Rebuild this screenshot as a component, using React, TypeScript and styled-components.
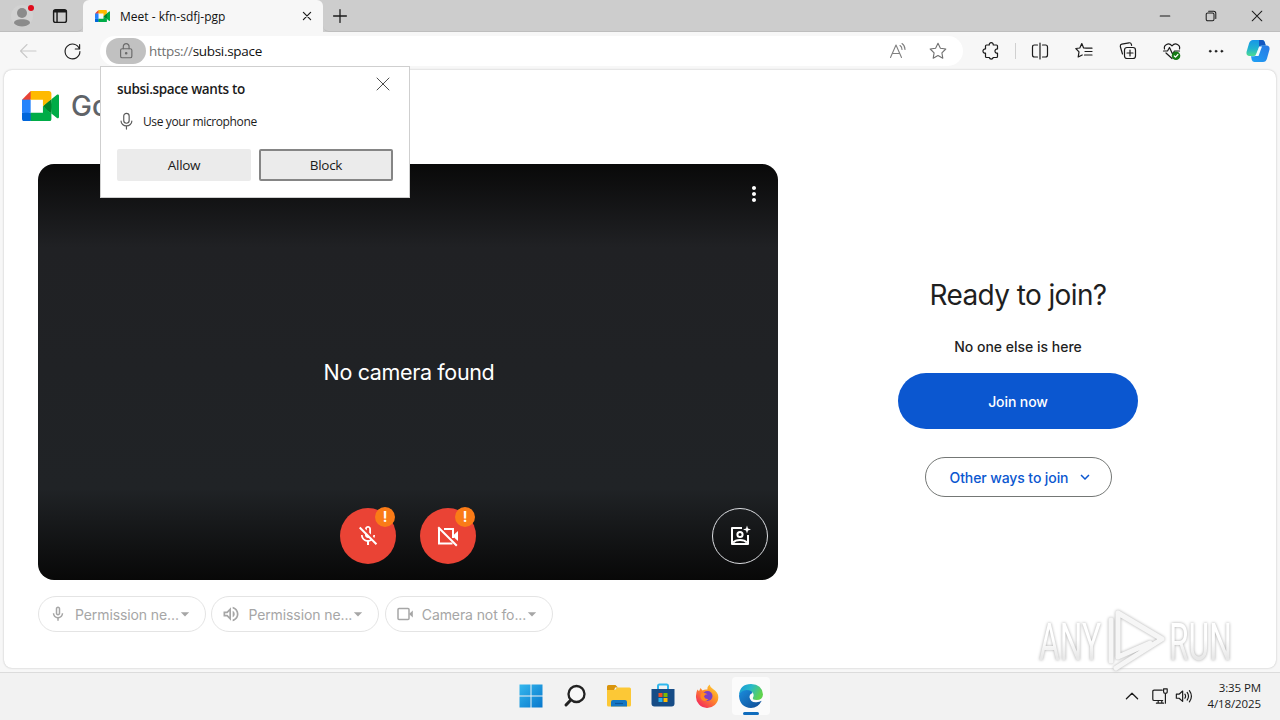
import type { ReactNode } from 'react';
import styled, { createGlobalStyle } from 'styled-components';
import {
  MdArrowDropDown,
  MdExpandMore,
  MdMoreVert,
  MdOutlineMicNone,
  MdOutlineMicOff,
  MdOutlineVolumeUp,
} from 'react-icons/md';

interface LineIconProps {
  size?: number;
  color?: string;
  weight?: number;
  children: ReactNode;
}

// 20-unit outline icon, used by the browser toolbar and the tray
const LineIcon: React.FC<LineIconProps> = ({
  size = 20,
  color = '#1b1b1b',
  weight = 1.1,
  children,
}) => (
  <svg
    width={size}
    height={size}
    viewBox="0 0 20 20"
    fill="none"
    stroke={color}
    strokeWidth={weight}
    strokeLinecap="round"
    strokeLinejoin="round"
  >
    {children}
  </svg>
);

const MeetLogo: React.FC<{ width: number }> = ({ width }) => (
  <svg width={width} height={(width * 72) / 87.5} viewBox="0 0 87.5 72">
    <path fill="#00832d" d="M49.5 36l8.53 9.75 11.47 7.33 2-17.02-2-16.64-11.69 6.44z" />
    <path fill="#0066da" d="M0 51.5V66c0 3.315 2.685 6 6 6h14.5l3-10.96-3-9.54-9.95-3z" />
    <path fill="#e94235" d="M20.5 0L0 20.5l10.55 3 9.95-3 2.95-9.41z" />
    <path fill="#2684fc" d="M20.5 20.5H0v31h20.5z" />
    <path
      fill="#00ac47"
      d="M82.6 8.68L69.5 19.42v33.66l13.16 10.79c1.97 1.54 4.85.135 4.85-2.37V11c0-2.535-2.945-3.925-4.91-2.32zM49.5 36v15.5h-29V72h43c3.315 0 6-2.685 6-6V53.08z"
    />
    <path fill="#ffba00" d="M63.5 0h-43v20.5h29V36l20-16.57V6c0-3.315-2.685-6-6-6z" />
  </svg>
);

const TabStrip = () => (
  <Strip>
    <StripTools>
      <Avatar>
        <svg width="22" height="22" viewBox="0 0 22 22">
          <circle cx="11" cy="11" r="11" fill="#d2d2d2" />
          <circle cx="11" cy="8" r="5" fill="#8b8b8b" />
          <path d="M3 18.200c0-3 3.200-4 8-4s8 1 8 4c-2 2.400-5 3.300-8 3.300s-6-.9-8-3.300z" fill="#8b8b8b" />
        </svg>
        <Dot />
      </Avatar>
      <LineIcon size={16} weight={1.8}>
        <rect x="2" y="2" width="16" height="16" rx="2.500" />
        <path d="M3 4h14" strokeWidth="3" />
        <path d="M6.300 5v12.500" />
      </LineIcon>
    </StripTools>
    <Tab>
      <MeetLogo width={15} />
      <TabTitle>Meet - kfn-sdfj-pgp</TabTitle>
      <LineIcon size={12} weight={2}>
        <path d="M4 4l12 12M16 4L4 16" />
      </LineIcon>
    </Tab>
    <NewTab>
      <LineIcon size={16} weight={1.6}>
        <path d="M10 2v16M2 10h16" />
      </LineIcon>
    </NewTab>
    <WindowButtons>
      <LineIcon size={12} weight={1.7}>
        <path d="M2 10h16" />
      </LineIcon>
      <LineIcon size={12} weight={1.7}>
        <rect x="2" y="5" width="13" height="13" rx="2.500" />
        <path d="M6 2h8.500Q18 2 18 5.500V14" />
      </LineIcon>
      <LineIcon size={12} weight={1.7}>
        <path d="M2 2l16 16M18 2L2 18" />
      </LineIcon>
    </WindowButtons>
  </Strip>
);

const Toolbar = () => (
  <Bar>
    <NavCell>
      <LineIcon color="#c9c9c9">
        <path d="M18 10H2.500M9 3.500L2.500 10 9 16.500" />
      </LineIcon>
    </NavCell>
    <NavCell>
      <LineIcon size={19} weight={1.2}>
        <path d="M17.300 7.200A7.800 7.800 0 1 0 17.800 10M17.500 2.800v4.600h-4.600" />
      </LineIcon>
    </NavCell>
    <AddressBar>
      <SiteInfo>
        <LineIcon color="#6b6b6b" size={18} weight={1.3}>
          <rect x="4" y="7.500" width="12.500" height="10" rx="1.800" />
          <path d="M7 7.500V5a3.200 3.200 0 0 1 6.400 0v2.500" />
          <circle cx="10.200" cy="12.500" r=".8" fill="#6b6b6b" />
        </LineIcon>
      </SiteInfo>
      <Url>
        <span>https://</span>subsi.space
      </Url>
      <AddressCell>
        <LineIcon color="#808080">
          <path d="M2.500 16.500L8 4l5.500 12.500M4.500 12.500h7M12 4.500c1.500 1 2 2.200 2 4M14 2.500c2.200 1.500 3 3.500 3 6" />
        </LineIcon>
      </AddressCell>
      <AddressCell>
        <LineIcon color="#707070">
          <path d="M10 2.300l2.400 4.900 5.400.8-3.900 3.800.9 5.400-4.800-2.600-4.800 2.600.9-5.400L2.200 8l5.400-.8z" />
        </LineIcon>
      </AddressCell>
    </AddressBar>
    <ToolGroup>
      <ToolCell>
        <LineIcon weight={1.2}>
          <path d="M5.500 4h2.800a2 2 0 1 1 3.900 0h3.300q1 0 1 1v3a2.100 2.100 0 1 0 0 4.100v3.400q0 1-1 1h-3.300a2 2 0 0 1-3.900 0H5.500q-1 0-1-1v-3.400a2.100 2.100 0 1 1 0-4.100V5q0-1 1-1z" />
        </LineIcon>
      </ToolCell>
      <Divider />
      <ToolCell>
        <LineIcon weight={1.2}>
          <path d="M7.500 4H4.500Q2.500 4 2.500 6v8q0 2 2 2h3M12.500 4h3q2 0 2 2v8q0 2-2 2h-3M10 2v16" />
        </LineIcon>
      </ToolCell>
      <ToolCell>
        <LineIcon weight={1.2}>
          <path d="M12.300 7.200L9.600 6.900 7.800 2.500 5.800 7 1.800 7.500l3.200 3.300-.8 5.200 4-2M12.300 7.200H18M11 10.500h7M10.500 14H18" />
        </LineIcon>
      </ToolCell>
      <ToolCell>
        <LineIcon weight={1.2}>
          <rect x="6.500" y="6.500" width="11" height="11" rx="2.500" />
          <path d="M12 9v6M9 12h6M4.500 13L2.300 5.500Q2 3.600 3.800 3.200l7.200-1.400q1.900-.3 2.400 1.600l.2.900" />
        </LineIcon>
      </ToolCell>
      <ToolCell>
        <LineIcon weight={1.2}>
          <path d="M2.500 8C1.500 4 6.500 1 10 4.800 13.500 1 18.500 4 17.500 8M4 12l6 5.500M1.500 10h4l2-3.500 3 6.500 2-3h5" />
          <circle cx="14" cy="14.800" r="4.300" fill="#157a15" stroke="none" />
          <path d="M12.300 15l1.200 1.200 2.400-2.700" stroke="#fff" />
        </LineIcon>
      </ToolCell>
      <ToolCell>
        <LineIcon weight={0.6}>
          <circle cx="4.200" cy="10.200" r="1" fill="#1b1b1b" />
          <circle cx="10" cy="10.200" r="1" fill="#1b1b1b" />
          <circle cx="15.800" cy="10.200" r="1" fill="#1b1b1b" />
        </LineIcon>
      </ToolCell>
      <CopilotCell>
        <svg width="24" height="24" viewBox="0 0 24 24">
          <defs>
            <linearGradient id="copLeft" x1="0" y1="0" x2="0" y2="1">
              <stop offset="0" stopColor="#1696e8" />
              <stop offset=".55" stopColor="#21b3cf" />
              <stop offset="1" stopColor="#4fdc90" />
            </linearGradient>
            <linearGradient id="copRight" x1="1" y1="0" x2="0" y2="1">
              <stop offset="0" stopColor="#2a78e4" />
              <stop offset="1" stopColor="#1ea2f5" />
            </linearGradient>
          </defs>
          <path d="M7 1h9q2 0 2.700 2l1 3.500h-4.200q-2 0-2.700 2L11 14.500Q10.300 17 8 17H3Q0 16.500.5 13L3 4.500Q4 1 7 1z" fill="url(#copLeft)" />
          <path d="M13 1h3q2 0 2.700 2l1 3.500h-4.200q-1.800 0-2.500 2z" fill="#1558c0" />
          <path d="M17 23H8.500q-2 0-2.700-2L5 17.200h3.200q2.200 0 2.900-2.200l1.900-6.500q.6-2 2.700-2H21q3 .5 2.500 4L21 19.500Q20 23 17 23z" fill="url(#copRight)" />
          <path d="M13.300 7.500h2.700L12.500 17H9.300z" fill="#f4fbff" />
        </svg>
      </CopilotCell>
    </ToolGroup>
  </Bar>
);

const PermissionPrompt = () => (
  <Prompt>
    <PromptHead>
      <PromptTitle>subsi.space wants to</PromptTitle>
      <LineIcon size={16} color="#333">
        <path d="M2.500 2.500l15 15M17.500 2.500l-15 15" />
      </LineIcon>
    </PromptHead>
    <PromptRow>
      <LineIcon size={18} color="#5a5a5a" weight={1.3}>
        <rect x="7.500" y="1.500" width="6" height="11" rx="3" />
        <path d="M4.500 10a6 5.500 0 0 0 12 0M10.500 15.500V19" />
      </LineIcon>
      <PromptText>Use your microphone</PromptText>
    </PromptRow>
    <PromptActions>
      <PromptButton>Allow</PromptButton>
      <PromptButton $focused>Block</PromptButton>
    </PromptActions>
  </Prompt>
);

const CameraPreview = () => (
  <Preview>
    <PreviewTop>
      <MdMoreVert size={24} />
    </PreviewTop>
    <PreviewMessage>No camera found</PreviewMessage>
    <PreviewControls>
      <RoundButton>
        <MdOutlineMicOff size={24} />
        <Alert>!</Alert>
      </RoundButton>
      <RoundButton>
        <svg width="24" height="24" viewBox="0 0 24 24" fill="none" stroke="#fff" strokeWidth="2">
          <path d="M8 5h9v9M3 4.500V19.500h13.500" />
          <path d="M17 11.500l5-4.500v10l-5-4.500z" fill="#fff" stroke="none" />
          <path d="M2.200 3.200l18.600 18.600" />
        </svg>
        <Alert>!</Alert>
      </RoundButton>
      <EffectsButton>
        <svg width="24" height="24" viewBox="0 0 24 24" fill="none" stroke="#fff" strokeWidth="2">
          <path d="M14 4H4v16h16V11" strokeLinejoin="round" />
          <circle cx="12" cy="10.500" r="2.600" />
          <path d="M5 18.500c3-3.500 11-3.500 14 0" />
          <path d="M19 1.500l1 3 3 1-3 1-1 3-1-3-3-1 3-1z" fill="#fff" stroke="none" />
        </svg>
      </EffectsButton>
    </PreviewControls>
  </Preview>
);

const CameraIcon = () => (
  <svg width="18" height="18" viewBox="0 0 18 18" fill="none" stroke="currentColor" strokeWidth="1.500">
    <rect x="2" y="3.500" width="11" height="11" rx="1" />
    <path d="M13 9l3.800-3.500v7z" fill="currentColor" stroke="none" />
  </svg>
);

const devices = [
  { icon: <MdOutlineMicNone size={18} />, label: 'Permission ne...' },
  { icon: <MdOutlineVolumeUp size={20} />, label: 'Permission ne...' },
  { icon: <CameraIcon />, label: 'Camera not fo...' },
];

const JoinPanel = () => (
  <Join>
    <JoinTitle>Ready to join?</JoinTitle>
    <JoinNote>No one else is here</JoinNote>
    <JoinButton>Join now</JoinButton>
    <OtherButton>
      Other ways to join
      <MdExpandMore size={18} />
    </OtherButton>
  </Join>
);

const Taskbar = () => (
  <Task>
    <span />
    <TaskApps>
      <AppCell>
        <svg width="24" height="24" viewBox="0 0 24 24">
          <defs>
            <linearGradient id="win" x1="0" y1="0" x2="1" y2="1">
              <stop offset="0" stopColor="#35b8ee" />
              <stop offset="1" stopColor="#0877cc" />
            </linearGradient>
          </defs>
          <path d="M.5.5h11v11H.5zM12.500.5h11v11h-11zM.5 12.500h11v11H.5zM12.500 12.500h11v11h-11z" fill="url(#win)" />
        </svg>
      </AppCell>
      <AppCell>
        <svg width="24" height="24" viewBox="0 0 24 24" fill="none" stroke="#222" strokeLinecap="round">
          <circle cx="13.500" cy="10" r="8" strokeWidth="2.300" fill="#f8f8f8" />
          <path d="M7.800 16L3 21" strokeWidth="3" />
        </svg>
      </AppCell>
      <AppCell>
        <svg width="26" height="24" viewBox="0 0 26 24">
          <path d="M1 2.500Q1 1 2.500 1h7l2.500 2.500h-3L8 7H1z" fill="#d9940b" />
          <path d="M1 6h8l2-2.500h12.500Q25 3.500 25 5v16q0 1.500-1.500 1.500h-21Q1 22.500 1 21z" fill="#fcc836" />
          <path d="M5 22.500V18q0-2 2-2h12q2 0 2 2v4.500z" fill="#1477c4" />
          <path d="M9 19.500h8" stroke="#0b559a" strokeWidth="1.200" />
        </svg>
      </AppCell>
      <AppCell>
        <svg width="24" height="25" viewBox="0 0 24 25">
          <path d="M7 7V3q0-1.500 1.500-1.500h7Q17 1.500 17 3v4" fill="none" stroke="#30b7ed" strokeWidth="2" />
          <path d="M.5 6h23v14.500q0 3-3 3h-17q-3 0-3-3z" fill="#164c86" />
          <path d="M7.500 10H11.500v4h-4z" fill="#f25022" />
          <path d="M12.500 10h4v4h-4z" fill="#7fba00" />
          <path d="M7.500 15h4v4h-4z" fill="#27b2ee" />
          <path d="M12.500 15h4v4h-4z" fill="#ffb900" />
        </svg>
      </AppCell>
      <AppCell>
        <svg width="24" height="24" viewBox="0 0 24 24">
          <defs>
            <linearGradient id="fox" x1="1" y1="0" x2=".2" y2="1">
              <stop offset="0" stopColor="#ffe13b" />
              <stop offset=".45" stopColor="#ff9326" />
              <stop offset="1" stopColor="#f3235f" />
            </linearGradient>
          </defs>
          <path d="M2.500 5.500L4 7.200 5.500 4l2 2.500Q10 5 12.500 5.500 12 3 14.500.5q.8 3 3.500 4.500Q23.500 8.500 23.300 13.500A11 10.500 0 0 1 1 13Q.8 8.500 2.500 5.500z" fill="url(#fox)" />
          <circle cx="12.500" cy="12" r="5" fill="#7b3fc6" />
          <path d="M6 9.500q3-2 6.500.8-3 0-3.500 2.200 1 3 4.500 2.500-3 3.500-6.500 1-2.500-3-1-6.500z" fill="#ff8a20" />
        </svg>
      </AppCell>
      <AppCell $active>
        <svg width="26" height="26" viewBox="0 0 26 26">
          <defs>
            <linearGradient id="edgeTop" x1="0" y1="0" x2="1" y2=".4">
              <stop offset="0" stopColor="#1696d8" />
              <stop offset=".5" stopColor="#27b9c9" />
              <stop offset="1" stopColor="#60d34e" />
            </linearGradient>
            <linearGradient id="edgeBase" x1="0" y1="0" x2="1" y2="1">
              <stop offset="0" stopColor="#1a8fe0" />
              <stop offset="1" stopColor="#104a92" />
            </linearGradient>
          </defs>
          <path d="M1 13Q1 7 7 6q7-.5 7.500 4-3 1-3 4.200 1 5.500 7 5 3-.2 5.200-1.500Q20 25 13 25 2 24.500 1 13z" fill="url(#edgeBase)" />
          <path d="M1 12Q2 1 13 1t12 10.500q-.5 5.500-6.500 5.500-4.500 0-3.500-2.500 1-1.500.5-3.500Q14 7 8.500 7 3 7.500 1 12z" fill="url(#edgeTop)" />
        </svg>
        <ActiveMark />
      </AppCell>
    </TaskApps>
    <Tray>
      <LineIcon size={16} weight={1.6}>
        <path d="M3 13.500L10 6.500l7 7" />
      </LineIcon>
      <LineIcon size={18} weight={1.3}>
        <path d="M12.500 3.500H3.500Q2 3.500 2 5v8.500Q2 15 3.500 15h9.500M6 18h8M8 15v3M12 15v3" />
        <path d="M14 2h4v3.500q0 1.500-2 1.500t-2-1.500zM16 7v11" />
      </LineIcon>
      <LineIcon size={18} weight={1.3}>
        <path d="M1.500 8v4.500h3L8.500 16V4.500L4.500 8zM11 8q1.500 2.200 0 4.500M13.500 6q3 4.200 0 8.500M16 4q4.500 6.200 0 12.500" />
      </LineIcon>
      <Clock>
        <span>3:35 PM</span>
        <span>4/18/2025</span>
      </Clock>
    </Tray>
  </Task>
);

const Watermark = () => (
  <Mark width="246" height="90" viewBox="0 0 246 90">
    <defs>
      <linearGradient id="markFill" x1="0" y1="0" x2="0" y2="1">
        <stop offset=".45" stopColor="#ffffff" />
        <stop offset=".75" stopColor="#e8e8e8" />
      </linearGradient>
    </defs>
    <g fill="url(#markFill)" fontFamily="Roboto, sans-serif" fontSize="51" fontWeight="400">
      <text x="5" y="54" textLength="62" lengthAdjust="spacingAndGlyphs">
        ANY
      </text>
      <text x="135" y="54" textLength="63" lengthAdjust="spacingAndGlyphs">
        RUN
      </text>
    </g>
    <path
      d="M77 55V14M84 7v44M84 7l44 26-46 29M84 51l32-14"
      fill="none"
      stroke="#f6f6f6"
      strokeWidth="5"
      strokeLinejoin="round"
      strokeLinecap="round"
    />
  </Mark>
);

const App = () => (
  <Desktop>
    <GlobalStyle />
    <TabStrip />
    <Toolbar />
    <PageFrame>
      <Brand>
        <MeetLogo width={37} />
        <BrandName>Go</BrandName>
      </Brand>
      <Columns>
        <div>
          <CameraPreview />
          <Devices>
            {devices.map((device, i) => (
              <Device key={i}>
                <DeviceIcon>{device.icon}</DeviceIcon>
                <DeviceLabel>{device.label}</DeviceLabel>
                <MdArrowDropDown size={20} />
              </Device>
            ))}
          </Devices>
        </div>
        <JoinPanel />
      </Columns>
    </PageFrame>
    <Taskbar />
    <PermissionPrompt />
    <Watermark />
  </Desktop>
);

const GlobalStyle = createGlobalStyle`
  body {
    margin: 0;
    overflow: hidden;
  }

  * {
    box-sizing: border-box;
  }

  svg {
    display: block;
    flex: none;
  }

  button {
    border: none;
    padding: 0;
    font: inherit;
  }
`;

const Desktop = styled.div`
  position: relative;
  display: flex;
  flex-direction: column;
  width: 1280px;
  height: 720px;
  background: #f7f7f7;
  color: #1b1b1b;
  font-family: 'Open Sans', 'Noto Sans', sans-serif;
  white-space: nowrap;
`;

const Strip = styled.div`
  display: flex;
  height: 32px;
  background: #cdcdcd;
`;

const StripTools = styled.div`
  display: flex;
  align-items: center;
  gap: 19px;
  width: 83px;
  padding-left: 11px;
  border-bottom: 1px solid #bebebe;
  border-radius: 0 0 6px 0;
`;

const Avatar = styled.div`
  position: relative;
`;

const Dot = styled.span`
  position: absolute;
  top: 0;
  right: -1px;
  width: 6px;
  height: 6px;
  border-radius: 50%;
  background: #e00b1c;
`;

const Tab = styled.div`
  display: flex;
  align-items: center;
  width: 240px;
  padding: 0 10px 0 12px;
  border-radius: 6px 6px 0 0;
  background: #f7f7f7;
`;

const TabTitle = styled.span`
  flex: 1;
  margin-left: 10px;
  color: #111;
  font-size: 12px;
`;

const NewTab = styled.div`
  display: flex;
  flex: 1;
  align-items: center;
  padding-left: 9px;
  border-bottom: 1px solid #bebebe;
  border-radius: 0 0 0 6px;
`;

const WindowButtons = styled.div`
  display: flex;
  align-items: center;
  gap: 34px;
  padding-right: 17px;
  border-bottom: 1px solid #bebebe;
`;

const Bar = styled.div`
  display: flex;
  align-items: center;
  height: 38px;
  padding: 0 0 0 6px;
`;

const NavCell = styled.div`
  display: flex;
  justify-content: center;
  width: 44px;
`;

const AddressBar = styled.div`
  display: flex;
  align-items: center;
  width: 863px;
  height: 30px;
  margin-left: 6px;
  padding: 0 5px 0 6px;
  border-radius: 15px;
  background: #fff;
`;

const SiteInfo = styled.div`
  display: flex;
  align-items: center;
  justify-content: center;
  width: 40px;
  height: 26px;
  border-radius: 13px;
  background: #c1c1c1;
`;

const Url = styled.div`
  flex: 1;
  margin-left: 3px;
  color: #111;
  font-size: 13.5px;
  letter-spacing: -0.3px;

  span {
    color: #707070;
  }
`;

const AddressCell = styled.div`
  display: flex;
  justify-content: center;
  width: 40px;
`;

const ToolGroup = styled.div`
  display: flex;
  align-items: center;
  margin-left: 6px;
`;

const ToolCell = styled.div`
  display: flex;
  justify-content: center;
  width: 44px;
`;

const Divider = styled.div`
  width: 1px;
  height: 16px;
  margin: 0 2px;
  background: #d0d0d0;
`;

const CopilotCell = styled.div`
  display: flex;
  justify-content: center;
  width: 40px;
`;

const PageFrame = styled.main`
  flex: none;
  height: 598px;
  margin: 0 4px;
  border-radius: 8px;
  background: #fff;
  box-shadow: 0 0 2px #b5b5b5;
  font-family: Inter, 'Open Sans', sans-serif;
`;

const Brand = styled.div`
  display: flex;
  align-items: center;
  height: 94px;
  padding: 0 0 22px 18px;
`;

const BrandName = styled.span`
  margin-left: 12px;
  color: #5f6368;
  font-size: 28px;
  font-weight: 500;
`;

const Columns = styled.div`
  display: flex;
  padding-left: 34px;
`;

const Preview = styled.section`
  display: flex;
  flex-direction: column;
  justify-content: space-between;
  width: 740px;
  height: 416px;
  border-radius: 16px;
  background: linear-gradient(#090909, #202124 20%, #202326 78%, #080808);
  color: #fff;
`;

const PreviewTop = styled.div`
  display: flex;
  justify-content: flex-end;
  height: 72px;
  padding: 18px 12px 0 0;
`;

const PreviewMessage = styled.div`
  padding-left: 2px;
  font-size: 21.5px;
  letter-spacing: -0.35px;
  text-align: center;
`;

const PreviewControls = styled.div`
  display: flex;
  gap: 24px;
  padding: 0 10px 16px 302px;
`;

const RoundButton = styled.button`
  position: relative;
  display: flex;
  align-items: center;
  justify-content: center;
  width: 56px;
  height: 56px;
  border-radius: 50%;
  background: #ea4335;
  color: #fff;
`;

const Alert = styled.span`
  position: absolute;
  top: -1px;
  right: 1px;
  width: 20px;
  height: 20px;
  border-radius: 50%;
  background: #fa7b17;
  font-size: 14px;
  font-weight: 700;
  line-height: 20px;
`;

const EffectsButton = styled(RoundButton)`
  margin-left: auto;
  border: 1px solid #dadce0;
  background: none;
`;

const Devices = styled.div`
  display: flex;
  gap: 5.4px;
  margin-top: 16px;
`;

const Device = styled.div`
  display: flex;
  align-items: center;
  width: 168px;
  height: 36px;
  padding-left: 10px;
  border: 1px solid #e4e4e4;
  border-radius: 18px;
  color: #a6a6a6;
`;

const DeviceIcon = styled.span`
  display: flex;
  flex: none;
  justify-content: center;
  width: 18px;
`;

const DeviceLabel = styled.span`
  flex: none;
  width: 100px;
  margin-left: 8px;
  font-size: 14px;
  letter-spacing: -0.1px;
`;

const Join = styled.section`
  display: flex;
  flex-direction: column;
  align-items: center;
  width: 480px;
  padding-top: 113px;
  color: #1f1f1f;
`;

const JoinTitle = styled.h1`
  margin: 0;
  font-size: 28px;
  font-weight: 400;
  line-height: 36px;
  letter-spacing: -0.6px;
`;

const JoinNote = styled.p`
  margin: 24px 0 16px;
  font-size: 14px;
  font-weight: 500;
  line-height: 20px;
`;

const JoinButton = styled.button`
  width: 240px;
  height: 56px;
  border-radius: 28px;
  background: #0b57d0;
  color: #fff;
  font-size: 14px;
  font-weight: 500;
  letter-spacing: -0.1px;
`;

const OtherButton = styled.button`
  display: flex;
  align-items: center;
  gap: 8px;
  width: 187px;
  height: 40px;
  margin-top: 28px;
  padding-left: 24px;
  border: 1px solid #747775;
  border-radius: 20px;
  background: #fff;
  color: #0b57d0;
  font-size: 14px;
  font-weight: 500;
  letter-spacing: -0.1px;
`;

const Prompt = styled.div`
  position: absolute;
  top: 66px;
  left: 100px;
  width: 310px;
  height: 132px;
  padding: 9px 16px 16px;
  border: 1px solid #cfcfcf;
  background: #fff;
`;

const PromptHead = styled.div`
  display: flex;
  justify-content: space-between;
  height: 33px;
  padding-right: 2px;
`;

const PromptTitle = styled.div`
  font-size: 13.5px;
  font-weight: 600;
  line-height: 27px;
  letter-spacing: -0.35px;
`;

const PromptRow = styled.div`
  display: flex;
  align-items: center;
  height: 24px;
`;

const PromptText = styled.span`
  margin-left: 8px;
  font-size: 12px;
  letter-spacing: -0.38px;
`;

const PromptActions = styled.div`
  display: flex;
  gap: 8px;
  margin-top: 16px;
`;

const PromptButton = styled.button<{ $focused?: boolean }>`
  width: 134px;
  height: 32px;
  border: 2px solid ${(p) => (p.$focused ? '#858585' : '#ebebeb')};
  border-radius: 2px;
  background: #ebebeb;
  color: #1b1b1b;
  font-size: 13.5px;
  letter-spacing: -0.3px;
`;

const Task = styled.footer`
  display: grid;
  grid-template-columns: 1fr auto 1fr;
  height: 48px;
  margin-top: auto;
  padding: 0 0 2px 1px;
  border-top: 1px solid #dcdcdc;
  background: #f2f2f2;
`;

const TaskApps = styled.div`
  display: flex;
  align-items: center;
`;

const AppCell = styled.div<{ $active?: boolean }>`
  position: relative;
  display: flex;
  align-items: center;
  justify-content: center;
  width: 38px;
  height: 38px;
  margin: 0 3px;
  border-radius: 4px;
  background: ${(p) => (p.$active ? '#fbfbfb' : 'none')};
`;

const ActiveMark = styled.span`
  position: absolute;
  bottom: 0;
  left: 11px;
  width: 16px;
  height: 3px;
  border-radius: 2px;
  background: #0f6cbd;
`;

const Tray = styled.div`
  display: flex;
  align-items: center;
  justify-content: flex-end;
  gap: 6px;
  padding-right: 19px;

  svg:first-child {
    margin-right: 5px;
  }
`;

const Clock = styled.div`
  display: flex;
  flex-direction: column;
  align-items: flex-end;
  width: 62px;
  font-size: 11.5px;
  line-height: 16px;
  letter-spacing: -0.1px;
`;

const Mark = styled.svg`
  position: absolute;
  top: 606px;
  left: 1034px;
  filter: drop-shadow(0 0 1.5px #aaa);
`;

export default App;
